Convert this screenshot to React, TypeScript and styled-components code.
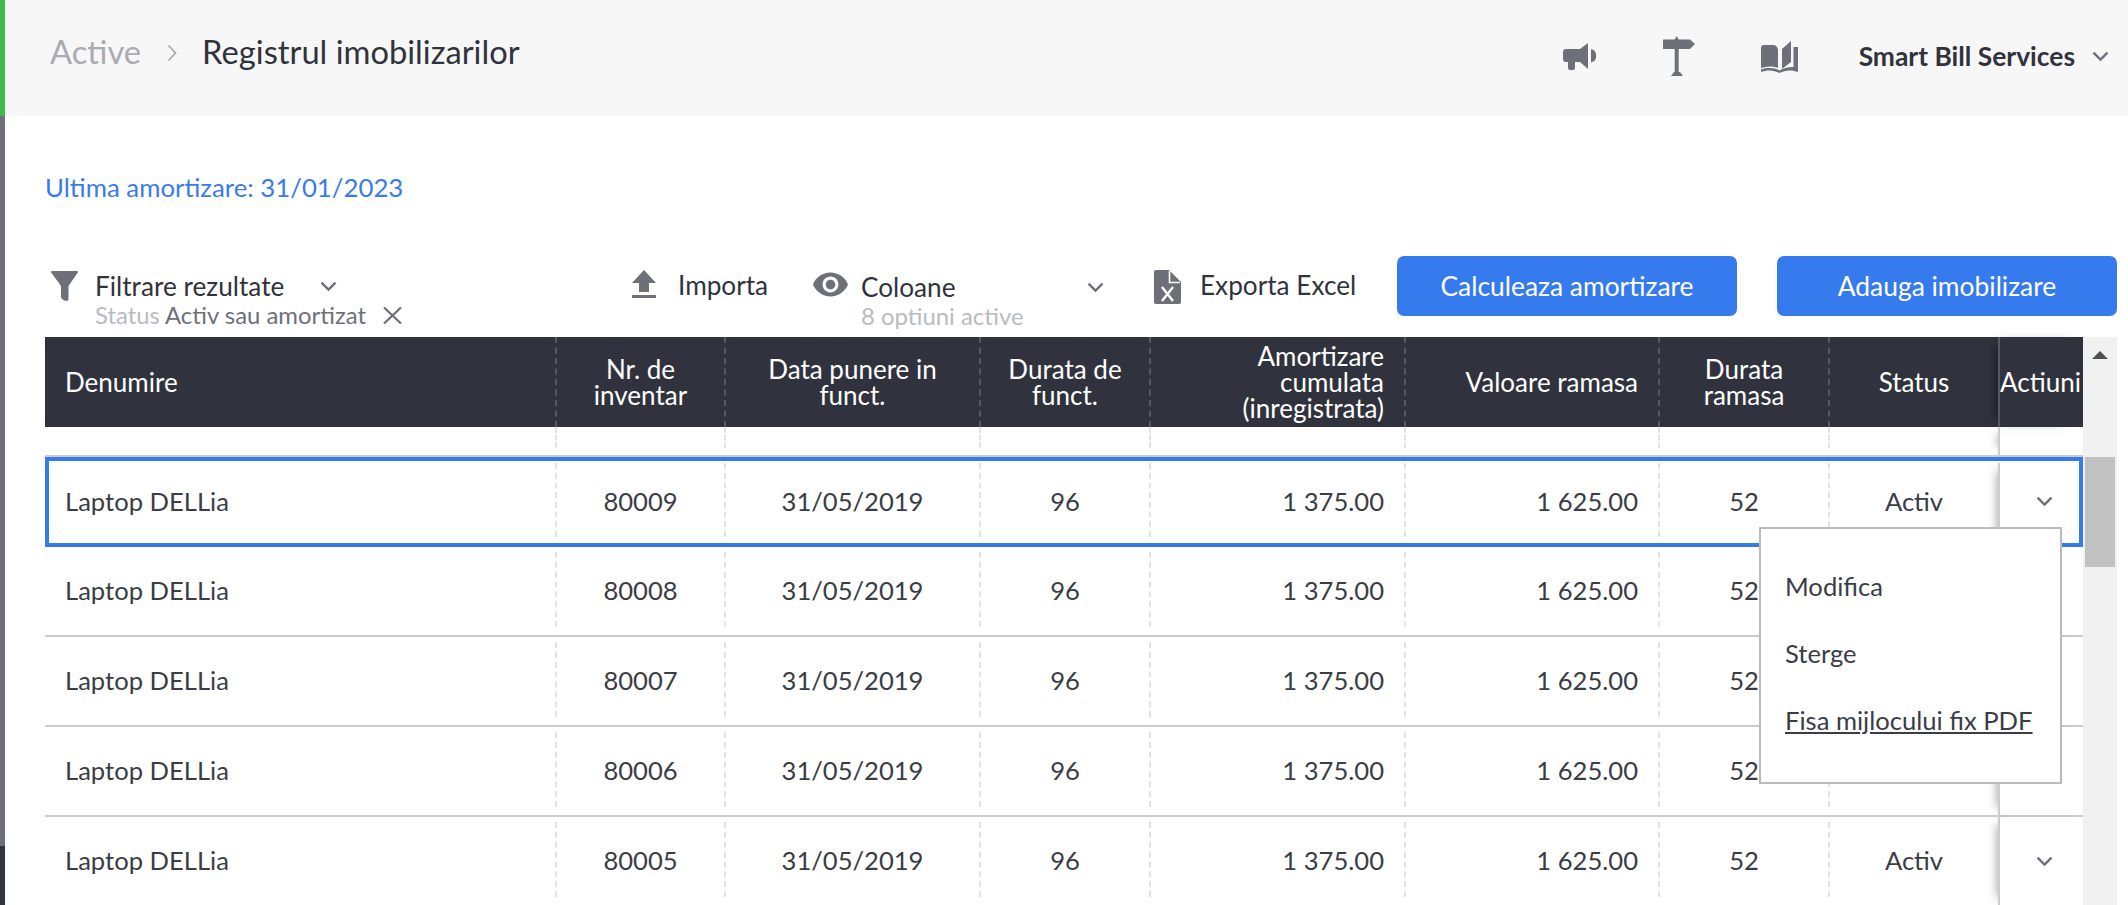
import styled, { createGlobalStyle } from 'styled-components';

const GlobalStyle = createGlobalStyle`
  html, body {
    margin: 0;
    padding: 0;
    background: #fff;
    overflow: hidden;
  }
  * {
    box-sizing: border-box;
  }
  body {
    font-family: Lato, "Open Sans", sans-serif;
    color: #30333d;
  }
`;

const COLUMNS = '510px 169px 255px 170px 255px 254px 170px 170px 85px';

const Page = styled.div`
  width: 2128px;
  height: 905px;
  display: flex;
  overflow: hidden;
`;

const Rail = styled.div`
  width: 5px;
  flex: none;
  display: flex;
  flex-direction: column;
  background: #6e7079;
`;

const RailTop = styled.div`
  height: 116px;
  background: #3dba4e;
`;

const RailFoot = styled.div`
  margin-top: auto;
  height: 59px;
  background: #33353d;
`;

const Main = styled.div`
  flex: 1;
  min-width: 0;
  display: flex;
  flex-direction: column;
`;

const Header = styled.header`
  height: 116px;
  flex: none;
  background: #f7f7f7;
  display: flex;
  align-items: center;
  padding: 0 19px 12px 45px;
`;

const Crumb = styled.span<{ $muted?: boolean }>`
  font-size: 32.7px;
  line-height: 40px;
  color: ${p => (p.$muted ? '#a9abb0' : '#30333d')};
`;

const CrumbSeparator = styled.span`
  display: flex;
  margin: 2px 25px 0 26px;
`;

const HeaderRight = styled.div`
  margin-left: auto;
  display: flex;
  align-items: center;
  padding-top: 8px;
`;

const HeaderIcon = styled.span<{ $gap: number }>`
  display: flex;
  margin-right: ${p => p.$gap}px;
`;

const Company = styled.span`
  font-size: 26.4px;
  font-weight: 700;
  line-height: 30px;
  margin-right: 17px;
`;

const LastRun = styled.div`
  margin: 54px 0 0 40px;
  height: 34px;
  font-size: 25.8px;
  line-height: 34px;
  color: #3a7bec;
`;

const Toolbar = styled.div`
  margin: 52px 0 0 40px;
  height: 81px;
  flex: none;
  display: flex;
  align-items: flex-start;
`;

const ToolGroup = styled.div<{ $width: number; $top: number; $left?: number; $gap: number }>`
  width: ${p => p.$width}px;
  flex: none;
  display: flex;
  align-items: flex-start;
  gap: ${p => p.$gap}px;
  padding-top: ${p => p.$top}px;
  padding-left: ${p => p.$left || 0}px;
`;

const ToolText = styled.div`
  display: flex;
  flex-direction: column;
`;

const ToolTitle = styled.div`
  display: flex;
  align-items: center;
  font-size: 26.2px;
  line-height: 30px;
  white-space: nowrap;
`;

const Arrow = styled.span<{ $gap: number }>`
  display: flex;
  margin-left: ${p => p.$gap}px;
`;

const ToolSub = styled.div`
  display: flex;
  align-items: center;
  font-size: 23.9px;
  line-height: 28px;
  color: #6e7079;
  white-space: nowrap;
`;

const SubMuted = styled.span`
  color: #b9bbbf;
  margin-right: 5px;
`;

const BlueButton = styled.button<{ $gap?: number }>`
  width: 340px;
  height: 60px;
  flex: none;
  margin-right: ${p => p.$gap || 0}px;
  border: 0;
  border-radius: 7px;
  background: #367bed;
  color: #fff;
  font-family: inherit;
  font-size: 26.4px;
`;

const TableArea = styled.div`
  flex: 1;
  min-height: 0;
  display: flex;
  margin: 0 11px 0 40px;
`;

const Table = styled.div`
  width: 2038px;
  flex: none;
  display: flex;
  flex-direction: column;
`;

const HeadRow = styled.div`
  height: 90px;
  flex: none;
  display: grid;
  grid-template-columns: ${COLUMNS};
  background: #30333d;
  color: #fff;
  font-size: 26px;
  line-height: 26px;
`;

const HeadCell = styled.div<{ $align: string; $first?: boolean }>`
  display: flex;
  align-items: center;
  justify-content: ${p => (p.$align === 'left' ? 'flex-start' : p.$align === 'right' ? 'flex-end' : 'center')};
  text-align: ${p => p.$align};
  padding: 0 ${p => (p.$align === 'center' ? '0' : '20px')};
  border-left: ${p => (p.$first ? '0' : '2px dashed #565862')};
`;

const HeadActions = styled.div`
  display: flex;
  align-items: center;
  white-space: nowrap;
  overflow: hidden;
  border-left: 2px solid #565862;
  box-shadow: -8px 0 12px -8px rgba(0, 0, 0, 0.6);
`;

const SpacerRow = styled.div`
  height: 30px;
  flex: none;
  display: grid;
  grid-template-columns: ${COLUMNS};
  border-bottom: 2px solid #ccc;
`;

const SpacerCell = styled.div<{ $first?: boolean }>`
  margin-bottom: 7px;
  border-left: ${p => (p.$first ? '0' : '2px dashed #e2e2e2')};
`;

const Row = styled.div<{ $selected?: boolean }>`
  height: 90px;
  flex: none;
  position: relative;
  display: grid;
  grid-template-columns: ${COLUMNS};
  font-size: 25.6px;
  color: #3a3d46;
  ${p => (p.$selected ? 'box-shadow: inset 0 0 0 4px #367bed;' : 'border-bottom: 2px solid #ccc;')}
`;

const Cell = styled.div<{ $align: string; $first?: boolean; $selected?: boolean }>`
  display: flex;
  align-items: center;
  justify-content: ${p => (p.$align === 'left' ? 'flex-start' : p.$align === 'right' ? 'flex-end' : 'center')};
  margin: ${p => (p.$selected ? '6px 0 10px' : '5px 0 8px')};
  padding: ${p => (p.$selected ? '1px' : '0')} ${p => (p.$align === 'center' ? '0' : '20px')} 0;
  border-left: ${p => (p.$first ? '0' : '2px dashed #e2e2e2')};
`;

const ActionCell = styled.div<{ $selected?: boolean }>`
  display: flex;
  align-items: center;
  justify-content: center;
  padding-left: 6px;
  margin: ${p => (p.$selected ? '6px 0 4px' : '0')};
  border-left: 2px solid #ccc;
  box-shadow: -8px 0 10px -8px rgba(0, 0, 0, 0.4);
  ${p => (p.$selected ? 'padding-bottom: 4px;' : '')}
`;

const Menu = styled.div`
  position: absolute;
  top: 70px;
  right: 21px;
  z-index: 5;
  width: 303px;
  height: 257px;
  padding: 24px 0 0 24px;
  background: #fff;
  border: 2px solid #bbb;
`;

const MenuItem = styled.div<{ $link?: boolean }>`
  height: 67px;
  line-height: 67px;
  font-size: 25.6px;
  color: #3a3d46;
  white-space: nowrap;
  text-decoration: ${p => (p.$link ? 'underline' : 'none')};
`;

const Scrollbar = styled.div`
  width: 34px;
  flex: none;
  background: #f1f1f1;
  display: flex;
  flex-direction: column;
  align-items: center;
  padding-top: 14px;
`;

const ScrollUp = styled.div`
  width: 0;
  height: 0;
  border-left: 8px solid transparent;
  border-right: 8px solid transparent;
  border-bottom: 8px solid #505050;
`;

const ScrollThumb = styled.div`
  width: 30px;
  height: 110px;
  margin-top: 98px;
  background: #c1c1c1;
`;

const Chevron = ({ size = 17 }: { size?: number }) => (
  <svg width={size} height={size * 0.6} viewBox="0 0 17 10" fill="none">
    <path d="M1.5 1.5 8.5 8.5 15.5 1.5" stroke="#6e7079" strokeWidth="2.4" />
  </svg>
);

const Megaphone = () => (
  <svg width="33" height="29" viewBox="0 0 33 29" fill="#6e7079">
    <path d="M3 7H17L25 1V27L17 20H3A3 3 0 0 1 0 17V10A3 3 0 0 1 3 7Z" />
    <path d="M5 20H12V26A2 2 0 0 1 10 28H7A2 2 0 0 1 5 26Z" />
    <path d="M28 7A7 7 0 0 1 28 20.5Z" />
  </svg>
);

const Signpost = () => (
  <svg width="32" height="40" viewBox="0 0 32 40" fill="#6e7079">
    <path d="M0 3.5H27L32 8 27 13H0Z" />
    <path d="M11.7 3.5 13.7 0 15.7 3.5V36H11.7Z" />
    <path d="M11 36H17L20 40H8Z" />
  </svg>
);

const Book = () => (
  <svg width="37" height="33" viewBox="0 0 37 33" fill="#6e7079">
    <path d="M0 8A3 3 0 0 1 3 5H12A5 5 0 0 1 17 10V28C12 26 6 26 0 28Z" />
    <path d="M21 9 30 1V22L21 29Z" />
    <path d="M32.5 7H37V32C31 29.5 24 30 18.5 33 13 30 6 29.5 0 32V29.5C6 27.5 13 27.5 18.5 30.5 24 27.5 28 27 32.5 27Z" />
  </svg>
);

const Funnel = () => (
  <svg width="27" height="30" viewBox="0 0 27 30" fill="#6e7079">
    <path d="M1 0H26A1 1 0 0 1 26.8 1.6L17.5 15V27.5A2.5 2.5 0 0 1 15 30C12 29 10 27.5 10 26V15L.2 1.6A1 1 0 0 1 1 0Z" />
  </svg>
);

const CloseX = () => (
  <svg width="19" height="17" viewBox="0 0 19 17" fill="none" style={{ marginLeft: 17 }}>
    <path d="M1 .5 18 16.5M18 .5 1 16.5" stroke="#6e7079" strokeWidth="2.2" />
  </svg>
);

const UploadIcon = () => (
  <svg width="24" height="28" viewBox="0 0 24 28" fill="#6e7079">
    <path d="M12 0 24 13H17V22H7V13H0Z" />
    <rect y="25" width="24" height="3" />
  </svg>
);

const Eye = () => (
  <svg width="35" height="25" viewBox="1 4.5 22 15" fill="#6e7079">
    <path d="M12 4.5C7 4.5 2.73 7.61 1 12c1.73 4.39 6 7.5 11 7.5s9.27-3.11 11-7.5c-1.73-4.39-6-7.5-11-7.5zM12 17c-2.76 0-5-2.24-5-5s2.24-5 5-5 5 2.24 5 5-2.24 5-5 5zm0-8c-1.66 0-3 1.34-3 3s1.34 3 3 3 3-1.34 3-3-1.34-3-3-3z" />
  </svg>
);

const ExcelFile = () => (
  <svg width="27" height="34" viewBox="0 0 27 34" fill="none">
    <path d="M2 0H15L27 12V32A2 2 0 0 1 25 34H2A2 2 0 0 1 0 32V2A2 2 0 0 1 2 0Z" fill="#6e7079" />
    <path d="M15.5 1V12.5H26" stroke="#fff" strokeWidth="1.6" />
    <path d="M8 17 19 31M19 17 8 31" stroke="#fff" strokeWidth="2.4" />
  </svg>
);

const HEAD = [
  { align: 'left', lines: ['Denumire'] },
  { align: 'center', lines: ['Nr. de', 'inventar'] },
  { align: 'center', lines: ['Data punere in', 'funct.'] },
  { align: 'center', lines: ['Durata de', 'funct.'] },
  { align: 'right', lines: ['Amortizare', 'cumulata', '(inregistrata)'] },
  { align: 'right', lines: ['Valoare ramasa'] },
  { align: 'center', lines: ['Durata', 'ramasa'] },
  { align: 'center', lines: ['Status'] },
];

const INVENTORY = ['80009', '80008', '80007', '80006', '80005'];

const rowValues = (nr: string) => [
  'Laptop DELLia',
  nr,
  '31/05/2019',
  '96',
  '1 375.00',
  '1 625.00',
  '52',
  'Activ',
];

const App = () => {
  return (
    <Page>
      <GlobalStyle />
      <Rail>
        <RailTop />
        <RailFoot />
      </Rail>
      <Main>
        <Header>
          <Crumb $muted>Active</Crumb>
          <CrumbSeparator>
            <svg width="10" height="18" viewBox="0 0 10 18" fill="none">
              <path d="M1.5 1.5 8.5 9 1.5 16.5" stroke="#a9abb0" strokeWidth="1.8" />
            </svg>
          </CrumbSeparator>
          <Crumb>Registrul imobilizarilor</Crumb>
          <HeaderRight>
            <HeaderIcon $gap={67}><Megaphone /></HeaderIcon>
            <HeaderIcon $gap={66}><Signpost /></HeaderIcon>
            <HeaderIcon $gap={61}><Book /></HeaderIcon>
            <Company>Smart Bill Services</Company>
            <Chevron />
          </HeaderRight>
        </Header>

        <LastRun>Ultima amortizare: 31/01/2023</LastRun>

        <Toolbar>
          <ToolGroup $width={587} $top={15} $left={6} $gap={17}>
            <Funnel />
            <ToolText>
              <ToolTitle>
                Filtrare rezultate
                <Arrow $gap={36}><Chevron /></Arrow>
              </ToolTitle>
              <ToolSub>
                <SubMuted>Status</SubMuted>
                Activ sau amortizat
                <CloseX />
              </ToolSub>
            </ToolText>
          </ToolGroup>
          <ToolGroup $width={181} $top={14} $gap={22}>
            <UploadIcon />
            <ToolTitle>Importa</ToolTitle>
          </ToolGroup>
          <ToolGroup $width={341} $top={16} $gap={13}>
            <Eye />
            <ToolText>
              <ToolTitle>
                Coloane
                <Arrow $gap={131}><Chevron /></Arrow>
              </ToolTitle>
              <ToolSub><SubMuted>8 optiuni active</SubMuted></ToolSub>
            </ToolText>
          </ToolGroup>
          <ToolGroup $width={243} $top={14} $gap={19}>
            <ExcelFile />
            <ToolTitle>Exporta Excel</ToolTitle>
          </ToolGroup>
          <BlueButton $gap={40}>Calculeaza amortizare</BlueButton>
          <BlueButton>Adauga imobilizare</BlueButton>
        </Toolbar>

        <TableArea>
          <Table>
            <HeadRow>
              {HEAD.map((col, i) => (
                <HeadCell key={col.lines[0]} $align={col.align} $first={i === 0}>
                  <div>
                    {col.lines.map(line => (
                      <div key={line}>{line}</div>
                    ))}
                  </div>
                </HeadCell>
              ))}
              <HeadActions>Actiuni</HeadActions>
            </HeadRow>
            <SpacerRow>
              {HEAD.map((col, i) => (
                <SpacerCell key={col.lines[0]} $first={i === 0} />
              ))}
              <ActionCell />
            </SpacerRow>
            {INVENTORY.map((nr, r) => (
              <Row key={nr} $selected={r === 0}>
                {rowValues(nr).map((value, i) => (
                  <Cell key={i} $align={HEAD[i].align} $first={i === 0} $selected={r === 0}>
                    {value}
                  </Cell>
                ))}
                <ActionCell $selected={r === 0}>
                  <Chevron />
                </ActionCell>
                {r === 0 && (
                  <Menu>
                    <MenuItem>Modifica</MenuItem>
                    <MenuItem>Sterge</MenuItem>
                    <MenuItem $link>Fisa mijlocului fix PDF</MenuItem>
                  </Menu>
                )}
              </Row>
            ))}
          </Table>
          <Scrollbar>
            <ScrollUp />
            <ScrollThumb />
          </Scrollbar>
        </TableArea>
      </Main>
    </Page>
  );
};

export default App;
